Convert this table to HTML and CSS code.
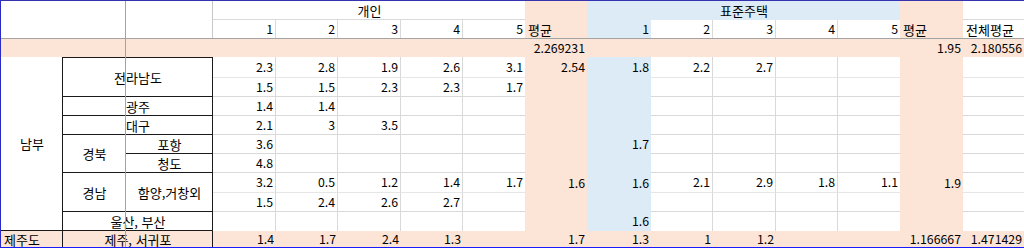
FILE: index.html
```html
<!DOCTYPE html>
<html lang="ko">
<head>
<meta charset="utf-8">
<title>지역별 평균</title>
<link rel="stylesheet" href="styles.css">
</head>
<body>
<div class="sheet">
  <div class="row r1">
    <div class="c corner cs3 rs2"></div>
    <div class="c m w nr cs5">개인</div>
    <div class="c pk"></div>
    <div class="c m bl cs5">표준주택</div>
    <div class="c pk"></div>
    <div class="c w nr"></div>
  </div>
  <div class="row r2">
    <div class="c r w">1</div>
    <div class="c r w">2</div>
    <div class="c r w">3</div>
    <div class="c r w">4</div>
    <div class="c r w nr">5</div>
    <div class="c pk">평균</div>
    <div class="c r bl">1</div>
    <div class="c r w">2</div>
    <div class="c r w">3</div>
    <div class="c r w">4</div>
    <div class="c r w nr">5</div>
    <div class="c pk">평균</div>
    <div class="c w nr">전체평균</div>
  </div>
  <div class="row r3">
    <div class="c pk cs8"></div>
    <div class="c r pk">2.269231</div>
    <div class="c pk cs5"></div>
    <div class="c r pk">1.95</div>
    <div class="c r pk">2.180556</div>
  </div>
  <div class="row r4 soft">
    <div class="c m lab rs9">남부</div>
    <div class="c m lab top cs2 rs2">전라남도</div>
    <div class="c r w">2.3</div>
    <div class="c r w">2.8</div>
    <div class="c r w">1.9</div>
    <div class="c r w">2.6</div>
    <div class="c r w nr">3.1</div>
    <div class="c r pk">2.54</div>
    <div class="c r bl">1.8</div>
    <div class="c r w">2.2</div>
    <div class="c r w">2.7</div>
    <div class="c r w"></div>
    <div class="c r w nr"></div>
    <div class="c r pk"></div>
    <div class="c r w nr"></div>
  </div>
  <div class="row r5">
    <div class="c r w">1.5</div>
    <div class="c r w">1.5</div>
    <div class="c r w">2.3</div>
    <div class="c r w">2.3</div>
    <div class="c r w nr">1.7</div>
    <div class="c r pk"></div>
    <div class="c r bl"></div>
    <div class="c r w"></div>
    <div class="c r w"></div>
    <div class="c r w"></div>
    <div class="c r w nr"></div>
    <div class="c r pk"></div>
    <div class="c r w nr"></div>
  </div>
  <div class="row r6">
    <div class="c m lab cs2">광주</div>
    <div class="c r w">1.4</div>
    <div class="c r w">1.4</div>
    <div class="c r w"></div>
    <div class="c r w"></div>
    <div class="c r w nr"></div>
    <div class="c r pk"></div>
    <div class="c r bl"></div>
    <div class="c r w"></div>
    <div class="c r w"></div>
    <div class="c r w"></div>
    <div class="c r w nr"></div>
    <div class="c r pk"></div>
    <div class="c r w nr"></div>
  </div>
  <div class="row r7">
    <div class="c m lab cs2">대구</div>
    <div class="c r w">2.1</div>
    <div class="c r w">3</div>
    <div class="c r w">3.5</div>
    <div class="c r w"></div>
    <div class="c r w nr"></div>
    <div class="c r pk"></div>
    <div class="c r bl"></div>
    <div class="c r w"></div>
    <div class="c r w"></div>
    <div class="c r w"></div>
    <div class="c r w nr"></div>
    <div class="c r pk"></div>
    <div class="c r w nr"></div>
  </div>
  <div class="row r8">
    <div class="c m lab rs2">경북</div>
    <div class="c m lab">포항</div>
    <div class="c r w">3.6</div>
    <div class="c r w"></div>
    <div class="c r w"></div>
    <div class="c r w"></div>
    <div class="c r w nr"></div>
    <div class="c r pk"></div>
    <div class="c r bl">1.7</div>
    <div class="c r w"></div>
    <div class="c r w"></div>
    <div class="c r w"></div>
    <div class="c r w nr"></div>
    <div class="c r pk"></div>
    <div class="c r w nr"></div>
  </div>
  <div class="row r9">
    <div class="c m lab">청도</div>
    <div class="c r w">4.8</div>
    <div class="c r w"></div>
    <div class="c r w"></div>
    <div class="c r w"></div>
    <div class="c r w nr"></div>
    <div class="c r pk"></div>
    <div class="c r bl"></div>
    <div class="c r w"></div>
    <div class="c r w"></div>
    <div class="c r w"></div>
    <div class="c r w nr"></div>
    <div class="c r pk"></div>
    <div class="c r w nr"></div>
  </div>
  <div class="row r10 soft">
    <div class="c m lab rs2">경남</div>
    <div class="c m lab rs2">함양,거창외</div>
    <div class="c r w">3.2</div>
    <div class="c r w">0.5</div>
    <div class="c r w">1.2</div>
    <div class="c r w">1.4</div>
    <div class="c r w nr">1.7</div>
    <div class="c r pk">1.6</div>
    <div class="c r bl">1.6</div>
    <div class="c r w">2.1</div>
    <div class="c r w">2.9</div>
    <div class="c r w">1.8</div>
    <div class="c r w nr">1.1</div>
    <div class="c r pk">1.9</div>
    <div class="c r w nr"></div>
  </div>
  <div class="row r11">
    <div class="c r w">1.5</div>
    <div class="c r w">2.4</div>
    <div class="c r w">2.6</div>
    <div class="c r w">2.7</div>
    <div class="c r w nr"></div>
    <div class="c r pk"></div>
    <div class="c r bl"></div>
    <div class="c r w"></div>
    <div class="c r w"></div>
    <div class="c r w"></div>
    <div class="c r w nr"></div>
    <div class="c r pk"></div>
    <div class="c r w nr"></div>
  </div>
  <div class="row r12 last">
    <div class="c m lab cs2">울산, 부산</div>
    <div class="c r w"></div>
    <div class="c r w"></div>
    <div class="c r w"></div>
    <div class="c r w"></div>
    <div class="c r w nr"></div>
    <div class="c r pk"></div>
    <div class="c r bl">1.6</div>
    <div class="c r w"></div>
    <div class="c r w"></div>
    <div class="c r w"></div>
    <div class="c r w nr"></div>
    <div class="c r pk"></div>
    <div class="c r w nr"></div>
  </div>
  <div class="row r13">
    <div class="c pk side">제주도</div>
    <div class="c m pk side cs2">제주, 서귀포</div>
    <div class="c r pk">1.4</div>
    <div class="c r pk">1.7</div>
    <div class="c r pk">2.4</div>
    <div class="c r pk">1.3</div>
    <div class="c r pk"></div>
    <div class="c r pk">1.7</div>
    <div class="c r pk">1.3</div>
    <div class="c r pk">1</div>
    <div class="c r pk">1.2</div>
    <div class="c r pk"></div>
    <div class="c r pk"></div>
    <div class="c r pk">1.166667</div>
    <div class="c r pk">1.471429</div>
  </div>
  <div class="freeze-v"></div>
  <div class="freeze-h"></div>
</div>
</body>
</html>
```
FILE: styles.css
```css
html, body {
  margin: 0;
  padding: 0;
  background: #ffffff;
}

body {
  font-family: "Noto Sans CJK KR", "Noto Sans", sans-serif;
  font-size: 13px;
  color: #000000;
}

.sheet {
  position: relative;
  width: 1024px;
  box-sizing: border-box;
  display: grid;
  grid-template-columns: 62px 63px 87px 63px 62px 63px 62px 62px 62px 64px 62px 63px 62px 62px 63px 61px;
  grid-template-rows: 19px 19px 18px 21px 19px 19px 19px 19px 19px 20px 19px 19px 16px;
  border-top: 1px solid #3434b0;
  border-left: 1px solid #2a2ac4;
  border-bottom: 1px solid #1a1aff;
}

.row {
  display: contents;
}

.c {
  box-sizing: border-box;
  display: flex;
  align-items: center;
  padding: 0 2px 0 3px;
  white-space: nowrap;
  line-height: 1;
  min-width: 0;
}

.r {
  justify-content: flex-end;
  font-size: 12.3px;
}
.m { justify-content: center; }

.cs2 { grid-column: span 2; }
.cs3 { grid-column: span 3; }
.cs5 { grid-column: span 5; }
.cs8 { grid-column: span 8; }
.rs2 { grid-row: span 2; }
.rs9 { grid-row: span 9; }

.w {
  background: #ffffff;
  border-right: 1px solid #d9d9d9;
  border-bottom: 1px solid #d9d9d9;
}
.w.nr { border-right: 0; }
.soft .w { border-bottom-color: #e6e6e6; }
.last .w { border-bottom: 0; }

.pk { background: #fce4d6; }
.bl { background: #ddebf7; }

.corner {
  border-right: 1px solid #c8c8c8;
}

.lab {
  background: #ffffff;
  border-right: 1px solid #1a1a1a;
  border-bottom: 1px solid #1a1a1a;
}
.lab.top { border-top: 1px solid #1a1a1a; }

.side { border-right: 1px solid #1a1a1a; }

.freeze-v {
  position: absolute;
  left: 124px;
  top: 0;
  bottom: 0;
  width: 1px;
  background: #a3a3a3;
}

.freeze-h {
  position: absolute;
  left: 0;
  right: 0;
  top: 37px;
  height: 1px;
  background: #a3a3a3;
}
```
